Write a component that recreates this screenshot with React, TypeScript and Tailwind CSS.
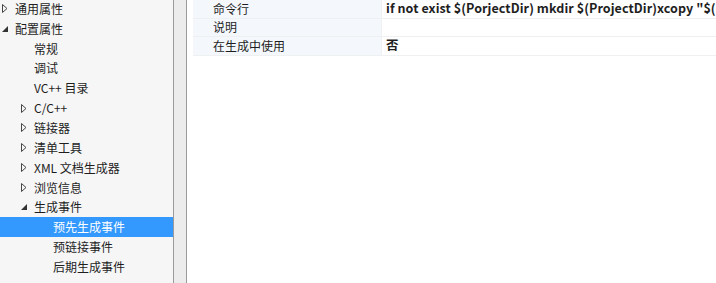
import React from "react";

const font = { fontFamily: '"Noto Sans CJK SC", "Noto Sans", sans-serif' };

function Collapsed() {
  return (
    <svg width="6" height="9" viewBox="0 0 6 9" className="shrink-0">
      <path d="M0.5 0.5 L5 4.5 L0.5 8.5 Z" fill="none" stroke="#444" strokeWidth="1" />
    </svg>
  );
}

function Expanded() {
  return (
    <svg width="6" height="6" viewBox="0 0 6 6" className="shrink-0">
      <path d="M6 0 L6 6 L0 6 Z" fill="#333" />
    </svg>
  );
}

type Item = { label: string; level: number; kind: "c" | "e" | "n"; selected?: boolean };

const items: Item[] = [
  { label: "通用属性", level: 0, kind: "c" },
  { label: "配置属性", level: 0, kind: "e" },
  { label: "常规", level: 1, kind: "n" },
  { label: "调试", level: 1, kind: "n" },
  { label: "VC++ 目录", level: 1, kind: "n" },
  { label: "C/C++", level: 1, kind: "c" },
  { label: "链接器", level: 1, kind: "c" },
  { label: "清单工具", level: 1, kind: "c" },
  { label: "XML 文档生成器", level: 1, kind: "c" },
  { label: "浏览信息", level: 1, kind: "c" },
  { label: "生成事件", level: 1, kind: "e" },
  { label: "预先生成事件", level: 2, kind: "n", selected: true },
  { label: "预链接事件", level: 2, kind: "n" },
  { label: "后期生成事件", level: 2, kind: "n" },
];

const textLeft = [15, 34, 53];
const arrowLeft = [2, 21, 40];

const props = [
  { name: "命令行", value: 'if not exist $(PorjectDir) mkdir $(ProjectDir)xcopy "$(' },
  { name: "说明", value: "" },
  { name: "在生成中使用", value: "否" },
];

export default function App() {
  return (
    <div className="w-[716px] h-[283px] flex overflow-hidden bg-white text-[12px] text-[#1e1e1e]" style={font}>
      <div className="w-[173px] shrink-0 bg-[#f6f6f6] flex flex-col overflow-hidden">
        <div className="-mt-[1px] flex flex-col">
          {items.map((it) => (
            <div
              key={it.label}
              className={`relative h-[19.85px] flex items-center ${it.selected ? "bg-[#3399ff] text-white" : ""}`}
            >
              {it.kind !== "n" && (
                <div className="absolute top-0 bottom-0 flex items-center" style={{ left: arrowLeft[it.level] }}>
                  {it.kind === "c" ? <Collapsed /> : <Expanded />}
                </div>
              )}
              <span className="absolute whitespace-nowrap leading-none" style={{ left: textLeft[it.level] }}>
                {it.label}
              </span>
            </div>
          ))}
        </div>
      </div>
      <div className="w-px shrink-0 bg-[#9a9a9a]" />
      <div className="w-[12px] shrink-0 bg-[#ececec]" />
      <div className="w-px shrink-0 bg-[#9a9a9a]" />
      <div className="flex-1 min-w-0 flex flex-col pl-[6px] overflow-hidden">
        <div className="flex flex-col">
          {props.map((p) => (
            <div key={p.name} className="flex h-[18.5px] border-b border-[#eef0f2]">
              <div className="w-[189px] shrink-0 bg-[#f4f8fc] border-r border-[#eef0f2] flex items-center pl-[20px]">
                {p.name}
              </div>
              <div className="flex-1 min-w-0 flex items-center pl-[4px] font-bold whitespace-nowrap text-[12.5px] tracking-[0.08px]">
                {p.value}
              </div>
            </div>
          ))}
        </div>
      </div>
    </div>
  );
}
